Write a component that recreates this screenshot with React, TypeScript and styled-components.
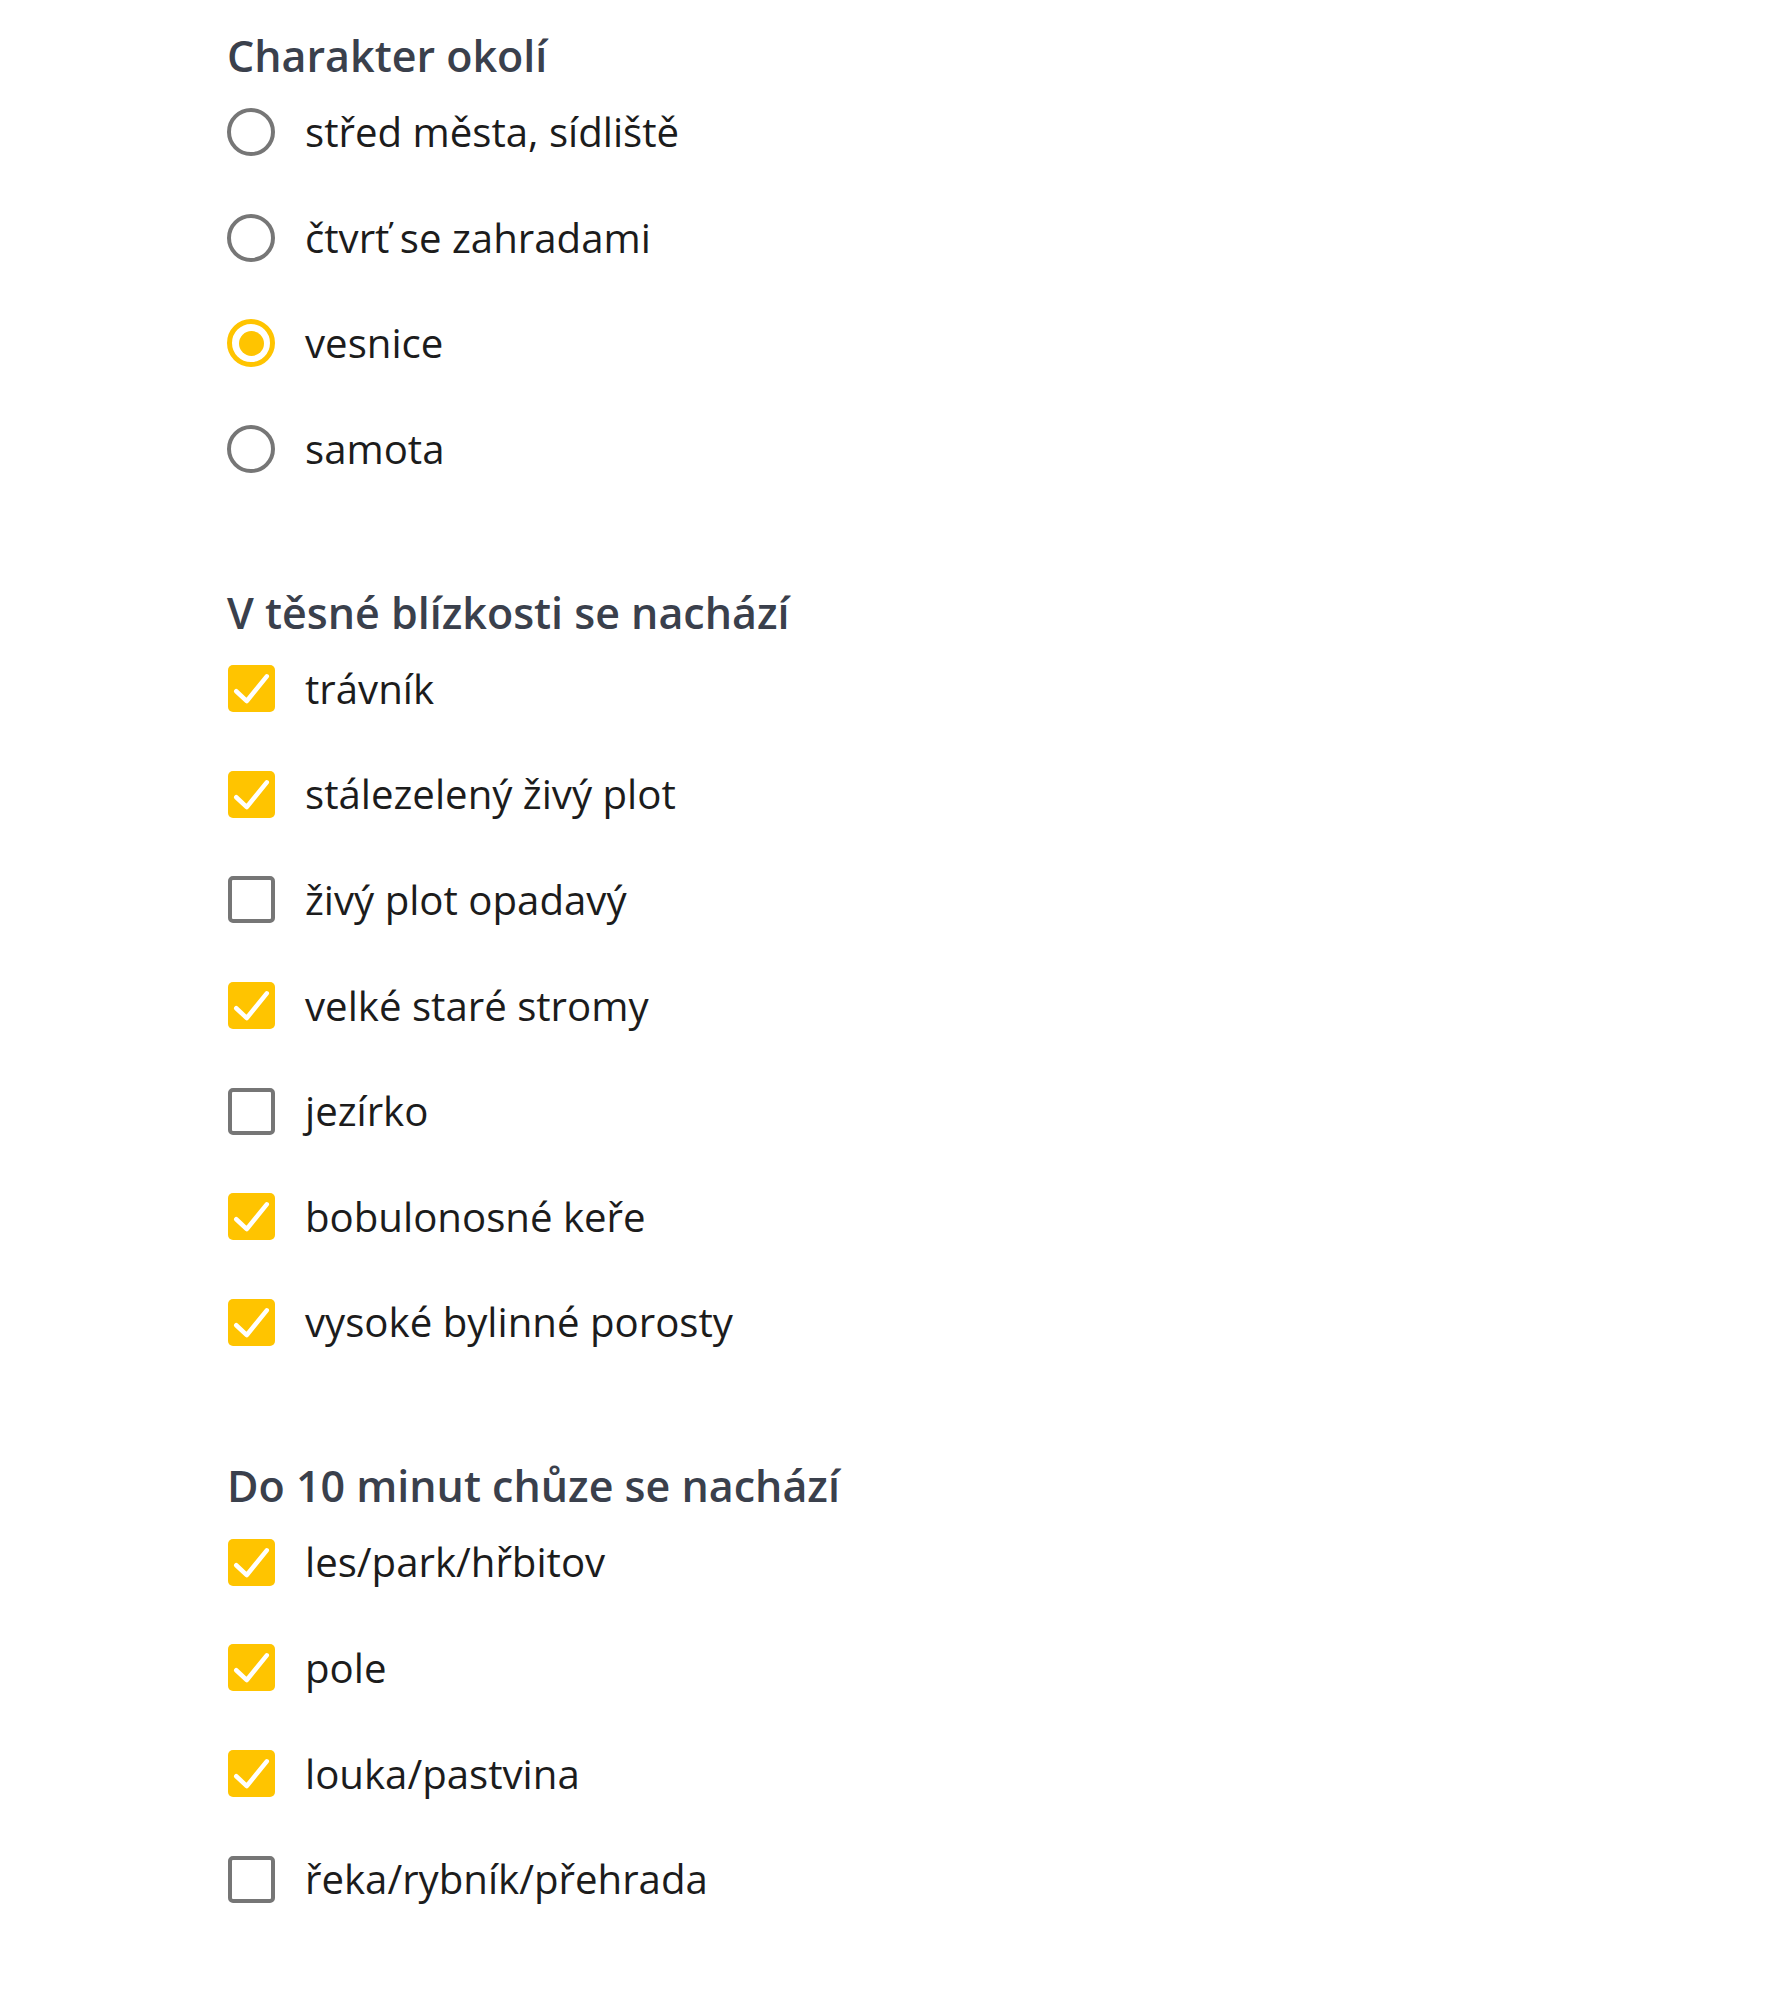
import React from "react";
import styled, { createGlobalStyle } from "styled-components";

const COLORS = {
  ACCENT: "#ffc400",
  BORDER: "#767676",
  TITLE: "#3a404c",
  TEXT: "#1c1c1c",
};

const GlobalStyle = createGlobalStyle`
  html, body {
    margin: 0;
    padding: 0;
    background: #ffffff;
  }
  body {
    font-family: "Open Sans", "Noto Sans", sans-serif;
  }
`;

type Option = { label: string; checked: boolean };

const surroundings: Option[] = [
  { label: "střed města, sídliště", checked: false },
  { label: "čtvrť se zahradami", checked: false },
  { label: "vesnice", checked: true },
  { label: "samota", checked: false },
];

const nearby: Option[] = [
  { label: "trávník", checked: true },
  { label: "stálezelený živý plot", checked: true },
  { label: "živý plot opadavý", checked: false },
  { label: "velké staré stromy", checked: true },
  { label: "jezírko", checked: false },
  { label: "bobulonosné keře", checked: true },
  { label: "vysoké bylinné porosty", checked: true },
];

const walking: Option[] = [
  { label: "les/park/hřbitov", checked: true },
  { label: "pole", checked: true },
  { label: "louka/pastvina", checked: true },
  { label: "řeka/rybník/přehrada", checked: false },
];

const CheckMark = () => (
  <svg width="47" height="47" viewBox="0 0 24 24" fill="none">
    <path
      d="M4.2 13.4 L9.6 18.4 L19.8 5.8"
      stroke="#ffffff"
      strokeWidth="2.3"
      strokeLinecap="round"
      strokeLinejoin="round"
    />
  </svg>
);

const Section = ({
  title,
  type,
  options,
}: {
  title: string;
  type: "radio" | "checkbox";
  options: Option[];
}) => (
  <Fieldset>
    <Title>{title}</Title>
    <List>
      {options.map((o) => (
        <Row key={o.label}>
          {type === "radio" ? (
            <Radio $checked={o.checked}>{o.checked && <Dot />}</Radio>
          ) : (
            <Box $checked={o.checked}>{o.checked && <CheckMark />}</Box>
          )}
          <Label>{o.label}</Label>
        </Row>
      ))}
    </List>
  </Fieldset>
);

const App = () => (
  <>
    <GlobalStyle />
    <Page>
      <Section title="Charakter okolí" type="radio" options={surroundings} />
      <Section title="V těsné blízkosti se nachází" type="checkbox" options={nearby} />
      <Section title="Do 10 minut chůze se nachází" type="checkbox" options={walking} />
    </Page>
  </>
);

const Page = styled.div`
  width: 1786px;
  min-height: 2000px;
  box-sizing: border-box;
  padding: 28px 0 0 227px;
  display: flex;
  flex-direction: column;
  gap: 107px;
`;

const Fieldset = styled.section`
  display: flex;
  flex-direction: column;
  gap: 19px;
`;

const Title = styled.h2`
  margin: 0;
  font-size: 43px;
  line-height: 56px;
  font-weight: 600;
  color: ${COLORS.TITLE};
`;

const List = styled.div`
  display: flex;
  flex-direction: column;
  gap: 47.6px;
`;

const Row = styled.div`
  height: 58px;
  display: flex;
  align-items: center;
  gap: 30px;
`;

const Radio = styled.span<{ $checked: boolean }>`
  width: 48px;
  height: 48px;
  box-sizing: border-box;
  border-radius: 50%;
  border: ${({ $checked }) =>
    $checked ? `5px solid ${COLORS.ACCENT}` : `4px solid ${COLORS.BORDER}`};
  display: flex;
  align-items: center;
  justify-content: center;
  flex-shrink: 0;
`;

const Dot = styled.span`
  width: 25px;
  height: 25px;
  border-radius: 50%;
  background: ${COLORS.ACCENT};
`;

const Box = styled.span<{ $checked: boolean }>`
  width: 47px;
  height: 47px;
  margin-left: 1px;
  box-sizing: border-box;
  border-radius: 5px;
  background: ${({ $checked }) => ($checked ? COLORS.ACCENT : "#ffffff")};
  border: ${({ $checked }) =>
    $checked ? "none" : `4px solid ${COLORS.BORDER}`};
  display: flex;
  align-items: center;
  justify-content: center;
  flex-shrink: 0;
`;

const Label = styled.span`
  font-size: 40.2px;
  line-height: 56px;
  color: ${COLORS.TEXT};
`;

export default App;
